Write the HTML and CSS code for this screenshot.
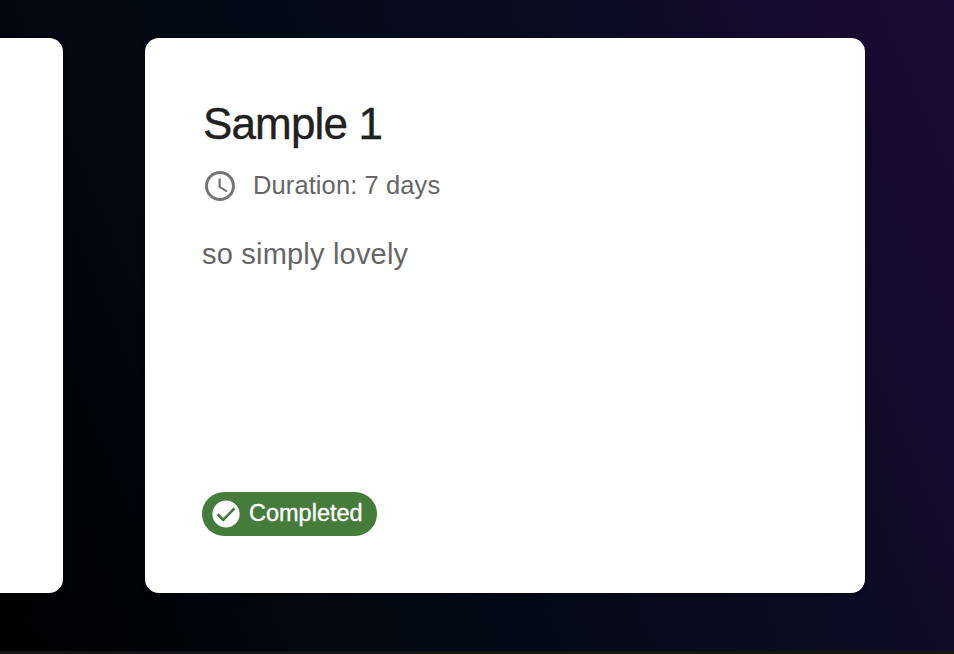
FILE: index.html
```html
<!DOCTYPE html>
<html lang="en">
<head>
<meta charset="utf-8">
<title>Courses</title>
<link rel="stylesheet" href="styles.css">
</head>
<body>
<main class="row">
  <article class="card card-prev"></article>
  <article class="card">
    <h2 class="title">Sample 1</h2>
    <div class="meta">
      <svg class="clock" viewBox="0 0 24 24"><path d="M11.99 2C6.47 2 2 6.48 2 12s4.47 10 9.99 10C17.52 22 22 17.52 22 12S17.52 2 11.99 2zM12 20c-4.42 0-8-3.58-8-8s3.58-8 8-8 8 3.58 8 8-3.58 8-8 8z"/><path d="M12.5 7H11v6l5.25 3.15.75-1.23-4.5-2.67z"/></svg>
      <span class="duration">Duration: 7 days</span>
    </div>
    <p class="desc">so simply lovely</p>
    <div class="chip">
      <svg class="check" viewBox="0 0 24 24"><circle cx="12" cy="12" r="10.2"/><path class="tick" d="M5.7 12.2l4.2 4.2 8.4-8.6"/></svg>
      <span class="label">Completed</span>
    </div>
  </article>
</main>
<footer class="footer"></footer>
</body>
</html>
```
FILE: styles.css
```css
* { box-sizing: border-box; }
body {
  display: flex;
  flex-direction: column;
  margin: 0;
  height: 654px;
  overflow: hidden;
  font-family: "Liberation Sans", Arial, sans-serif;
  background: linear-gradient(67deg, #000 0%, #010306 14%, #020811 25%, #020b17 42%, #060b1c 52%, #0d0b23 70%, #120b2a 82%, #1c0b36 100%);
}
.row { display: flex; gap: 82px; padding-top: 38px; flex: 1; }
.footer { height: 3px; background: #141414; }
.card {
  display: flex;
  flex-direction: column;
  align-items: flex-start;
  flex: none;
  width: 720px;
  height: 555px;
  padding: 57px;
  border-radius: 14px;
  background: #fff;
  box-shadow: 0 2px 6px rgba(0, 0, 0, .3);
}
.card-prev { margin-left: -657px; }
.title { margin: 0 0 0 1px; font-size: 44px; line-height: 58px; font-weight: 400; letter-spacing: -.85px; color: #212121; -webkit-text-stroke: .4px #212121; white-space: nowrap; }
.meta { display: flex; align-items: center; margin-top: 14px; height: 38px; color: #666; }
.clock { width: 36px; height: 36px; fill: #757575; }
.duration { margin: -2px 0 0 15px; font-size: 25.5px; letter-spacing: .1px; white-space: nowrap; }
.desc { margin: 28px 0 0; font-size: 29px; line-height: 42px; letter-spacing: .2px; color: #666; white-space: nowrap; }
.chip { display: flex; align-items: center; width: 175px; height: 44px; margin-top: auto; padding-left: 8px; border-radius: 22px; background: #467c3b; color: #fff; }
.check { width: 32px; height: 32px; fill: #fff; }
.check .tick { fill: none; stroke: #467c3b; stroke-width: 2; }
.label { margin: -1px 0 0 7px; font-size: 23.5px; -webkit-text-stroke: .35px #fff; white-space: nowrap; }
```
